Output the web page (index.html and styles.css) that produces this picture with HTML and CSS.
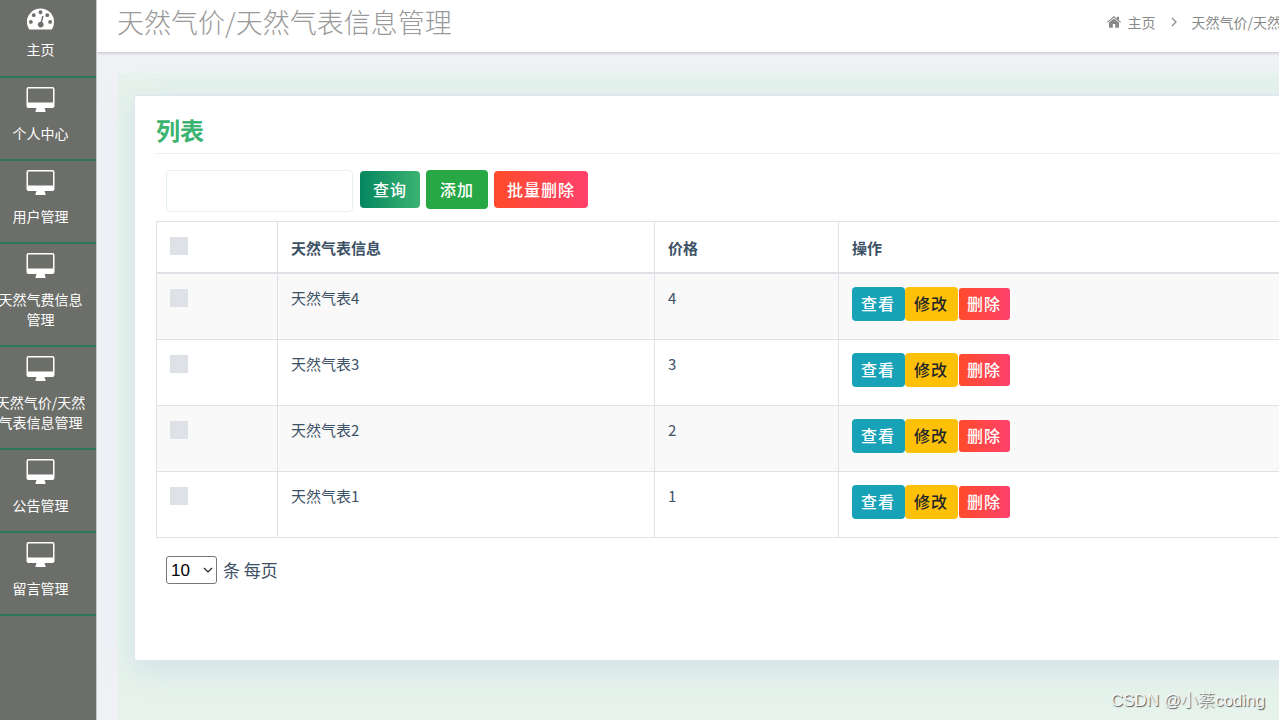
FILE: index.html
```html
<!DOCTYPE html>
<html lang="zh-CN">
<head>
<meta charset="utf-8">
<title>天然气价/天然气表信息管理</title>
<link rel="stylesheet" href="styles.css">
</head>
<body>
<svg class="sprite" aria-hidden="true">
  <symbol id="i-desktop" viewBox="0 0 28 25">
    <path fill-rule="evenodd" d="M2 0h24a2 2 0 0 1 2 2v17a2 2 0 0 1-2 2h-8l1 3v1H9v-1l1-3H2a2 2 0 0 1-2-2V2a2 2 0 0 1 2-2zM1.500 2v13.500h25V2a.5.5 0 0 0-.5-.5H2a.5.5 0 0 0-.5.5z"/>
  </symbol>
  <symbol id="i-gauge" viewBox="0 0 28 22">
    <path fill-rule="evenodd" d="M14 0a14 14 0 0 1 14 14c0 2.700-.7 5.200-2 7.300-.3.500-.7.700-1.200.7H3.200c-.5 0-.9-.2-1.200-.7A14 14 0 0 1 14 0zM4 12a2 2 0 1 0 0 4 2 2 0 0 0 0-4zM7 5a2 2 0 1 0 0 4 2 2 0 0 0 0-4zM14 2a2 2 0 1 0 0 4 2 2 0 0 0 0-4zM21 5a2 2 0 1 0 0 4 2 2 0 0 0 0-4zM24 12a2 2 0 1 0 0 4 2 2 0 0 0 0-4zM15.700 7.800l-1.500 6a3 3 0 1 0 1.500.4l1.500-6z"/>
  </symbol>
  <symbol id="i-home" viewBox="0 0 14 12">
    <path d="M7 0l3 2.600V.8h2v3.500l2 1.700-.7.800L7 1.600.7 6.800 0 6z"/>
    <path d="M7 2.400l5 4.100V11a.7.700 0 0 1-.7.700H8.200V8H5.800v3.700H2.700A.7.700 0 0 1 2 11V6.500z"/>
  </symbol>
</svg>
<div class="app">
  <nav class="sidebar">
    <a class="nav-item nav-home" href="#"><svg class="gauge"><use href="#i-gauge"/></svg><span>主页</span></a>
    <a class="nav-item" href="#"><svg><use href="#i-desktop"/></svg><span>个人中心</span></a>
    <a class="nav-item" href="#"><svg><use href="#i-desktop"/></svg><span>用户管理</span></a>
    <a class="nav-item" href="#"><svg><use href="#i-desktop"/></svg><span>天然气费信息管理</span></a>
    <a class="nav-item" href="#"><svg><use href="#i-desktop"/></svg><span>天然气价/天然气表信息管理</span></a>
    <a class="nav-item" href="#"><svg><use href="#i-desktop"/></svg><span>公告管理</span></a>
    <a class="nav-item" href="#"><svg><use href="#i-desktop"/></svg><span>留言管理</span></a>
  </nav>
  <div class="main">
    <div class="main-inner">
      <header class="topbar">
        <h1>天然气价/天然气表信息管理</h1>
        <div class="crumbs">
          <a href="#"><svg class="home"><use href="#i-home"/></svg>主页</a>
          <svg class="chev" viewBox="0 0 6 10"><path d="M1 1l4 4-4 4"/></svg>
          <span>天然气价/天然气表信息管理</span>
        </div>
      </header>
      <div class="stage">
        <main class="card">
          <h2>列表</h2>
          <form class="tools">
            <input class="search" type="text" aria-label="搜索">
            <div class="tool-buttons">
              <button type="button" class="btn query">查询</button>
              <button type="button" class="btn add">添加</button>
              <button type="button" class="btn danger">批量删除</button>
            </div>
          </form>
          <table>
            <colgroup><col class="c-check"><col class="c-name"><col class="c-price"><col></colgroup>
            <thead>
              <tr><th><input type="checkbox" aria-label="全选"></th><th>天然气表信息</th><th>价格</th><th>操作</th></tr>
            </thead>
            <tbody>
              <tr><td><input type="checkbox" aria-label="天然气表4"></td><td>天然气表4</td><td>4</td><td><div class="ops"><button type="button" class="btn view">查看</button><button type="button" class="btn edit">修改</button><button type="button" class="btn danger small">删除</button></div></td></tr>
              <tr><td><input type="checkbox" aria-label="天然气表3"></td><td>天然气表3</td><td>3</td><td><div class="ops"><button type="button" class="btn view">查看</button><button type="button" class="btn edit">修改</button><button type="button" class="btn danger small">删除</button></div></td></tr>
              <tr><td><input type="checkbox" aria-label="天然气表2"></td><td>天然气表2</td><td>2</td><td><div class="ops"><button type="button" class="btn view">查看</button><button type="button" class="btn edit">修改</button><button type="button" class="btn danger small">删除</button></div></td></tr>
              <tr><td><input type="checkbox" aria-label="天然气表1"></td><td>天然气表1</td><td>1</td><td><div class="ops"><button type="button" class="btn view">查看</button><button type="button" class="btn edit">修改</button><button type="button" class="btn danger small">删除</button></div></td></tr>
            </tbody>
          </table>
          <div class="pager">
            <select id="size"><option>10</option><option>25</option><option>50</option></select>
            <label for="size">条 每页</label>
          </div>
        </main>
      </div>
    </div>
  </div>
</div>
<div class="watermark">CSDN @小蔡coding</div>
</body>
</html>
```
FILE: styles.css
```css
* { box-sizing: border-box; }
body {
  margin: 0;
  overflow: hidden;
  font-family: "Noto Sans CJK SC", "Noto Sans", sans-serif;
  color: #3d5166;
  background: #eff1f5;
}
a { color: inherit; text-decoration: none; }
.sprite { position: absolute; width: 0; height: 0; }
.app { display: flex; min-height: 100vh; }

.sidebar {
  flex: 0 0 97px;
  background: #6c6e69;
  border-right: 1px solid #c4c6cb;
  overflow: hidden;
}
.nav-item {
  display: flex;
  flex-direction: column;
  align-items: center;
  gap: 11px;
  padding: 9px 15px 16px 0;
  border-bottom: 2px solid #2b775c;
  color: #fff;
  font-size: 14px;
  line-height: 20px;
  text-align: center;
}
.nav-item svg { width: 29px; height: 25px; fill: #fff; }
.nav-item span { width: 90px; margin: 0 -5px; }
.nav-home { padding-top: 8px; padding-bottom: 17px; gap: 9px; }
.nav-item .gauge { width: 27px; height: 22px; }

.main { flex: 1; min-width: 0; overflow: hidden; display: flex; }
.main-inner {
  flex: 0 0 calc(100% + 120px);
  display: flex;
  flex-direction: column;
}
.topbar {
  display: flex;
  justify-content: space-between;
  align-items: center;
  height: 52px;
  padding: 0 34px 8px 20px;
  background: #fff;
  box-shadow: 0 1px 3px rgba(0, 0, 0, .2);
  white-space: nowrap;
}
h1 { margin: 0; font-size: 27px; font-weight: 300; line-height: 40px; color: #999; }
.crumbs { display: flex; align-items: center; color: #888; font-size: 14px; line-height: 20px; }
.crumbs a { display: flex; align-items: center; gap: 7px; }
.home { width: 14px; height: 12px; fill: #888; }
.chev { width: 6px; height: 10px; margin: 0 15px; fill: none; stroke: #888; stroke-width: 1.2; }

.stage {
  flex: 1;
  margin: 21px 0 0 21px;
  padding: 22px 17px 58px 16px;
  background: #e6f3ec;
}
.card {
  min-height: 566px;
  padding: 15px 20px 15px 21px;
  background: #fff;
  border: 1px solid #dde5ee;
  border-radius: 3px;
  box-shadow: 0 8px 30px rgba(180, 195, 220, .4);
}
h2 {
  margin: 0 0 16px;
  padding-bottom: 4px;
  border-bottom: 1px solid #eee;
  font-size: 24px;
  line-height: 38px;
  color: #3cb371;
}
.tools { display: flex; align-items: flex-start; gap: 7px; padding-left: 10px; margin: 0 0 9px; }
.search { width: 187px; height: 42px; padding: 0 12px; border: 1px solid #e4f1ee; border-radius: 4px; font-size: 16px; }
.tool-buttons { display: flex; align-items: center; gap: 6px; }
.btn {
  height: 37px;
  padding: 0 13px 2px;
  border: 0;
  border-radius: 4px;
  font-family: inherit;
  font-size: 16px;
  font-weight: 500;
  letter-spacing: 1px;
  line-height: 24px;
  color: #fff;
}
.query { background: linear-gradient(90deg, #04865f, #3cb371); }
.add { height: 39px; padding: 0 14px 2px; background: #28a745; }
.danger { background: linear-gradient(90deg, #ff4b2b, #ff416c); }

table { width: 100%; border-collapse: collapse; table-layout: fixed; font-size: 15px; line-height: 22px; }
.c-check { width: 121px; }
.c-name { width: 377px; }
.c-price { width: 184px; }
th, td { border: 1px solid #dee2e6; padding: 13px; text-align: left; vertical-align: top; }
th { border-bottom-width: 2px; vertical-align: bottom; }
tbody tr:nth-child(odd) { background: #f9f9f9; }
input[type="checkbox"] { appearance: none; display: block; width: 18px; height: 18px; margin: 2px 0 4px; background: #dee2e6; }
.ops { display: flex; align-items: center; padding-bottom: 5px; }
.ops .btn { height: 34px; padding: 0 10px 2px 9px; }
.ops .view { background: #17a2b8; }
.ops .edit { margin-right: 1px; background: #ffc107; color: #212529; }
.ops .small { height: 32px; padding: 0 9px 2px 8px; border-radius: 3px; }

.pager { display: flex; align-items: center; gap: 6px; padding: 18px 0 0 10px; font-size: 17px; line-height: 28px; }
select {
  appearance: none;
  width: 51px;
  height: 28px;
  padding: 0 0 0 4px;
  border: 1px solid #767676;
  border-radius: 3px;
  background: #fff url("data:image/svg+xml,%3Csvg xmlns='http://www.w3.org/2000/svg' width='10' height='6' fill='none' stroke='%23222' stroke-width='1.2'%3E%3Cpath d='M1 1l4 4 4-4'/%3E%3C/svg%3E") no-repeat right 3px center;
  color: #000;
  font: 17px "Liberation Sans", sans-serif;
}

.watermark {
  position: absolute;
  right: 14px;
  bottom: 7px;
  font: 17px/24px "Liberation Sans", "Noto Sans CJK SC", sans-serif;
  font-weight: 300;
  color: #f4f8f6;
  text-shadow: 1px 1px 1px #555;
}
```
